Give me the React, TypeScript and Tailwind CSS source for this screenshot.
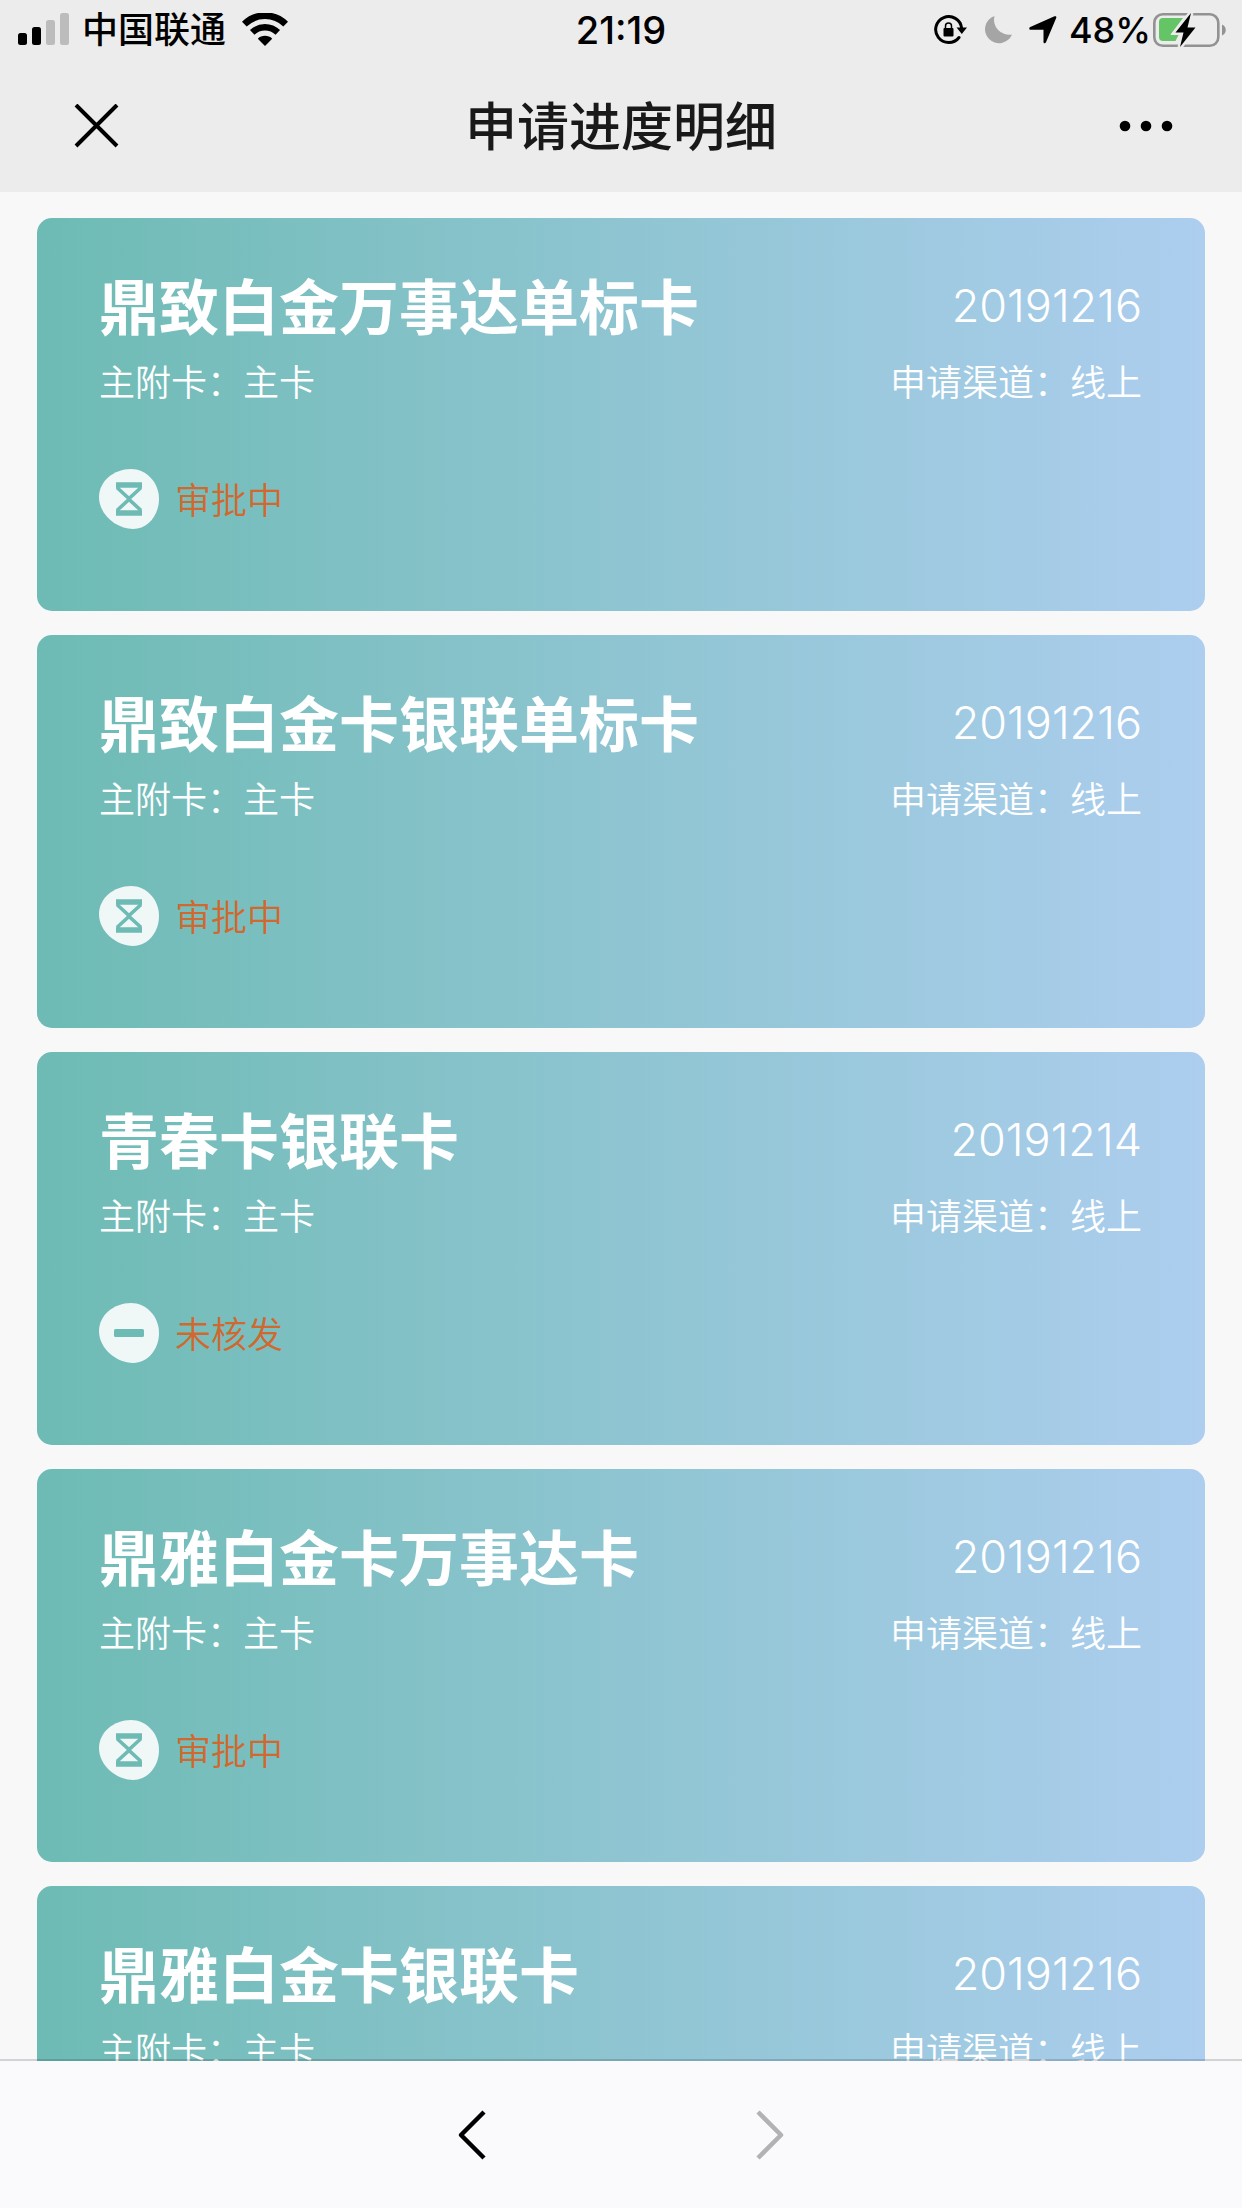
type Status = "pending" | "rejected";

type Application = {
    id: number;
    name: string;
    date: string;
    cardType: string;
    channel: string;
    status: Status;
};

const applications: Application[] = [
    { id: 1, name: "鼎致白金万事达单标卡", date: "20191216", cardType: "主卡", channel: "线上", status: "pending" },
    { id: 2, name: "鼎致白金卡银联单标卡", date: "20191216", cardType: "主卡", channel: "线上", status: "pending" },
    { id: 3, name: "青春卡银联卡", date: "20191214", cardType: "主卡", channel: "线上", status: "rejected" },
    { id: 4, name: "鼎雅白金卡万事达卡", date: "20191216", cardType: "主卡", channel: "线上", status: "pending" },
    { id: 5, name: "鼎雅白金卡银联卡", date: "20191216", cardType: "主卡", channel: "线上", status: "pending" },
];

const statusLabels: Record<Status, string> = {
    pending: "审批中",
    rejected: "未核发",
};

function SignalIcon() {
    return (
        <svg width="54" height="34" viewBox="-2 0 54 34">
            <rect x="0" y="20" width="9" height="12" rx="2.5" />
            <rect x="14" y="14" width="9" height="18" rx="2.5" />
            <rect x="28" y="7" width="9" height="25" rx="2.5" fill="#bcbcbc" />
            <rect x="42" y="0" width="9" height="32" rx="2.5" fill="#bcbcbc" />
        </svg>
    );
}

function WifiIcon() {
    return (
        <svg width="46" height="34" viewBox="0 0 46 34" fill="none" stroke="#000">
            <path d="M2.3 11.2A29.5 29.5 0 0 1 43.7 11.2" strokeWidth="6.8" />
            <path d="M10.2 19.4A18.3 18.3 0 0 1 35.8 19.4" strokeWidth="6.4" />
            <path d="M15.8 25.7C19.5 21.9 26.5 21.9 30.2 25.7L23 32.9Z" fill="#000" stroke="none" />
        </svg>
    );
}

function RotationLockIcon() {
    return (
        <svg width="33" height="30" viewBox="0 0 33 30">
            <path d="M25 22.5A13 13 0 1 1 27.6 13" fill="none" stroke="#000" strokeWidth="3" strokeLinecap="round" />
            <path d="M22.5 12.5H33L27.8 19Z" />
            <rect x="9.5" y="13" width="10" height="8.5" rx="1" />
            <path d="M11.5 14V11a3 3 0 0 1 6 0v3" fill="none" stroke="#000" strokeWidth="1.5" />
        </svg>
    );
}

function MoonIcon() {
    return (
        <svg width="28" height="30" viewBox="0 0 28 30" fill="#a5a5a5">
            <path d="M10.5 1A14 14 0 1 0 28 19.5A15 15 0 0 1 10.5 1Z" />
        </svg>
    );
}

function LocationIcon() {
    return (
        <svg width="28" height="28" viewBox="0 0 28 28">
            <path d="M25.5.3C26.9-.2 27.7.6 27.2 2L17 26.2C16.3 27.9 14.5 27.6 14.5 26V13.8H1.6C.1 13.8-.3 11.8 1.3 11.1Z" />
        </svg>
    );
}

function BatteryIcon() {
    return (
        <svg width="73" height="36" viewBox="0 0 73 36">
            <rect x="1.3" y="2.3" width="64" height="31.5" rx="8.5" fill="none" stroke="#929292" strokeWidth="2.6" />
            <path d="M69 12.5C74 14.5 74 21.5 69 23.5Z" fill="#929292" />
            <path d="M10 6H30L18 22H26L22.5 29H10A4 4 0 0 1 6 25V10A4 4 0 0 1 10 6Z" fill="#65c466" />
            <path d="M38 1L22.5 20.5H30.5L27 35L42.5 15.5H34.5Z" fill="#000" stroke="#ececec" strokeWidth="5" />
            <path d="M38 1L22.5 20.5H30.5L27 35L42.5 15.5H34.5Z" />
        </svg>
    );
}

function StatusIcon({ status }: { status: Status }) {
    return (
        <svg width="60" height="60" viewBox="0 0 60 60">
            <path
                d="M32 0C47 0 60 13 60 30C60 46 49 60 34 60C18 60 0 46 0 28C0 12 15 0 32 0Z"
                fill="#f0f7f7"
            />
            {status === "pending" ? (
                <g fill="none" stroke="#6dbbb4" strokeWidth="3.6">
                    <path d="M17 16H43M17 44H43" strokeWidth="5.4" />
                    <path d="M19 16V19.5L30 29.5L41 19.5V16" />
                    <path d="M19 44V40.5L30 30.5L41 40.5V44" />
                </g>
            ) : (
                <rect x="15" y="26" width="30" height="8" rx="1.5" fill="#6dbbb4" />
            )}
        </svg>
    );
}

function StatusBar() {
    return (
        <div className="grid h-[60px] grid-cols-[1fr_auto_1fr] items-center px-4 font-medium leading-none text-black">
            <div className="flex items-center">
                <SignalIcon />
                <span className="ml-3 text-[36px]">中国联通</span>
                <span className="ml-4">
                    <WifiIcon />
                </span>
            </div>
            <time className="text-[38px]">21:19</time>
            <div className="flex items-center justify-end">
                <RotationLockIcon />
                <span className="ml-[17px]">
                    <MoonIcon />
                </span>
                <span className="ml-[17px]">
                    <LocationIcon />
                </span>
                <span className="ml-3 text-[36px]">48%</span>
                <span className="ml-0.5">
                    <BatteryIcon />
                </span>
            </div>
        </div>
    );
}

function ApplicationCard({ item }: { item: Application }) {
    return (
        <li className="h-[393px] shrink-0 rounded-[15px] bg-linear-to-r from-[#6dbbb4] to-[#adceef] pl-[62px] pr-[63px] pt-[54px] text-white">
            <div className="flex items-start justify-between">
                <h2 className="text-[60px] font-bold leading-[72px]">{item.name}</h2>
                <time className="text-[45px] font-[350] leading-[68px]">{item.date}</time>
            </div>
            <div className="flex justify-between text-[36px] font-[350] leading-[78px]">
                <p>主附卡：{item.cardType}</p>
                <p>申请渠道：{item.channel}</p>
            </div>
            <div className="mt-[47px] flex items-center gap-4 text-[36px] font-[350] leading-none text-[#d0692f]">
                <StatusIcon status={item.status} />
                <span className="pt-1">{statusLabels[item.status]}</span>
            </div>
        </li>
    );
}

export default function App() {
    return (
        <div className="flex h-screen flex-col overflow-hidden bg-[#f8f8f8] font-[Inter,'Noto_Sans_CJK_SC',sans-serif]">
            <header className="shrink-0 bg-[#ececec]">
                <StatusBar />
                <nav className="flex h-[132px] items-center justify-between px-[68px]">
                    <button type="button" aria-label="关闭" className="w-[60px]">
                        <svg width="58" height="44" viewBox="0 0 58 44" fill="none" stroke="#000" strokeWidth="4">
                            <path d="M8 1L49 42M49 1L8 42" />
                        </svg>
                    </button>
                    <h1 className="pt-1 text-[52px] font-medium leading-none text-[#191919]">申请进度明细</h1>
                    <button type="button" aria-label="更多" className="flex w-[60px] justify-end">
                        <svg width="55" height="12" viewBox="0 0 55 12">
                            <circle cx="6" cy="6" r="5.3" />
                            <circle cx="27" cy="6" r="5.3" />
                            <circle cx="48" cy="6" r="5.3" />
                        </svg>
                    </button>
                </nav>
            </header>

            <main className="min-h-0 flex-1 overflow-hidden px-[37px] pt-[26px]">
                <ul className="flex flex-col gap-6">
                    {applications.map((item) => (
                        <ApplicationCard key={item.id} item={item} />
                    ))}
                </ul>
            </main>

            <footer className="z-10 flex h-[147px] shrink-0 items-center justify-center gap-[236px] bg-[#fafafc] shadow-[0_-2px_0_rgba(0,0,0,0.15)]">
                <button type="button" aria-label="后退">
                    <svg width="60" height="52" viewBox="0 0 60 52" fill="none" stroke="#000" strokeWidth="4.5" strokeLinejoin="round">
                        <path d="M41 3L18 26L41 49" />
                    </svg>
                </button>
                <button type="button" aria-label="前进" disabled>
                    <svg width="60" height="52" viewBox="0 0 60 52" fill="none" stroke="#b2b2b2" strokeWidth="4.5" strokeLinejoin="round">
                        <path d="M19 3L42 26L19 49" />
                    </svg>
                </button>
            </footer>
        </div>
    );
}
